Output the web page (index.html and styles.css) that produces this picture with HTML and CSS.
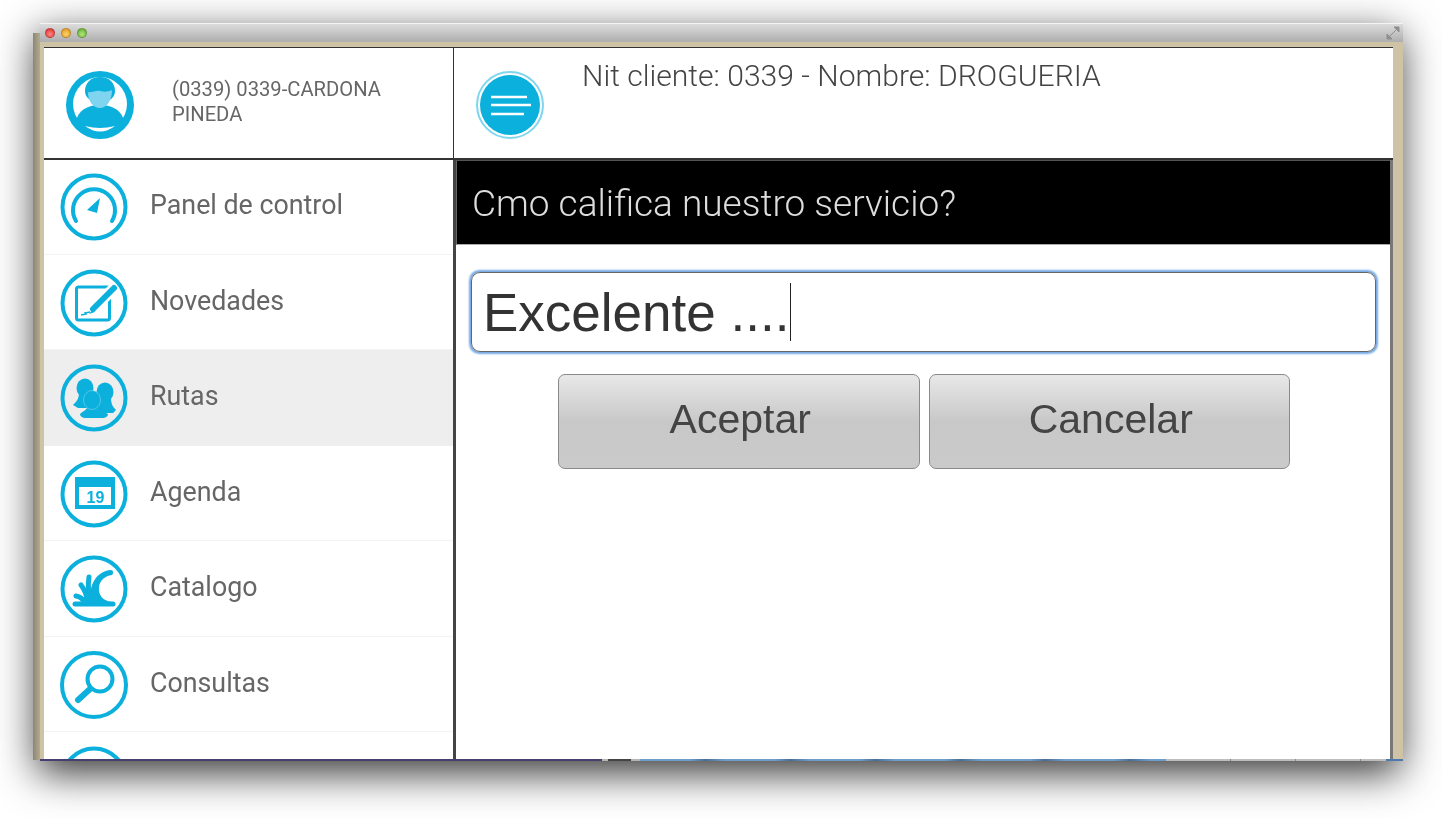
FILE: index.html
```html
<!DOCTYPE html>
<html lang="es">
<head>
<meta charset="utf-8">
<title>Encuesta</title>
<link rel="stylesheet" href="styles.css">
</head>
<body>
<div class="window">
  <div class="titlebar">
    <div class="lights"><span class="light red"></span><span class="light amber"></span><span class="light green"></span></div>
    <svg class="expand" width="14" height="14" viewBox="0 0 14 14"><path d="M1 13V8l5 5zM13 1v5L8 1zM3 11l8-8" fill="#8f8f8f" stroke="#8f8f8f"/></svg>
  </div>
  <div class="frame">
    <div class="app">
      <header class="top">
        <div class="user">
          <svg class="avatar" width="68" height="68" viewBox="0 0 68 68">
            <circle cx="34" cy="34" r="34" fill="#0bb0dc"/>
            <circle cx="34" cy="33" r="27" fill="#fff"/>
            <path d="M10 50C12 40 21 34 34 34s22 6 24 16l-8 14H18z" fill="#0bb0dc"/>
            <path d="M19 20C19 12 25 6 34 6s15 6 15 14c0 7-6 11-15 11s-15-4-15-11z" fill="#0bb0dc"/>
            <path d="M22 21c4 1 8-2 12-1s8 1 12-1c0 10-5 18-12 18s-12-7-12-16z" fill="#7fd4ef"/>
            <path d="M19 55Q34 59 49 55Q34 66 19 55z" fill="#fff"/>
          </svg>
          <div class="user-name">(0339) 0339-CARDONA PINEDA</div>
        </div>
        <div class="client">
          <svg class="burger" width="68" height="68" viewBox="0 0 68 68">
            <circle cx="34" cy="34" r="33" fill="#fff" stroke="#7fd6ef" stroke-width="2"/>
            <circle cx="34" cy="34" r="30" fill="#0bb0dc"/>
            <path d="M15 26h36M15 34h40M15 43h33" stroke="#fff" stroke-width="2.6" fill="none"/>
          </svg>
          <div class="client-text">Nit cliente: 0339 - Nombre: DROGUERIA</div>
        </div>
      </header>
      <div class="body">
        <nav class="menu">
          <a class="item">
            <svg class="ico" width="68" height="68" viewBox="0 0 68 68">
              <circle class="ring" cx="34" cy="34" r="31.5"/>
              <path d="M16 48A21 21 0 1 1 52 48" fill="none" stroke="#0bb0dc" stroke-width="4" stroke-linecap="round"/>
              <path d="M40 25L27 37L37 40z" fill="#0bb0dc"/>
            </svg>
            <span>Panel de control</span>
          </a>
          <a class="item">
            <svg class="ico" width="68" height="68" viewBox="0 0 68 68">
              <circle class="ring" cx="34" cy="34" r="31.5"/>
              <rect x="16.5" y="18" width="33" height="33" rx="2" fill="none" stroke="#0bb0dc" stroke-width="3"/>
              <path d="M30 43L56 17" stroke="#fff" stroke-width="11"/>
              <path d="M33 40L54 19" stroke="#0bb0dc" stroke-width="6" stroke-linecap="round"/>
              <path d="M33 40L29 45L35 43z" fill="#0bb0dc"/>
              <path d="M21 46l5-1-1-1 5-1" fill="none" stroke="#0bb0dc" stroke-width="1.4"/>
            </svg>
            <span>Novedades</span>
          </a>
          <a class="item active">
            <svg class="ico" width="68" height="68" viewBox="0 0 68 68">
              <circle class="ring" cx="34" cy="34" r="31.5"/>
              <ellipse cx="25" cy="24" rx="8.5" ry="9.5" fill="#0bb0dc"/>
              <ellipse cx="45" cy="28" rx="8.5" ry="9.5" fill="#0bb0dc"/>
              <path d="M13 41c3-3 6-6 6-12h12l5 15H18z" fill="#0bb0dc"/>
              <path d="M56 46c-3-3-5-6-5-12H37l-4 15h20z" fill="#0bb0dc"/>
              <path d="M20 50c3-3 7-4 8-8h10c1 4 5 5 10 8 0 2-2 4-6 4H26c-4 0-6-2-6-4z" fill="#0bb0dc"/>
              <ellipse cx="32" cy="36" rx="8.5" ry="9.5" fill="#0bb0dc" stroke="#7fd4ef" stroke-width=".6"/>
            </svg>
            <span>Rutas</span>
          </a>
          <a class="item">
            <svg class="ico" width="68" height="68" viewBox="0 0 68 68">
              <circle class="ring" cx="34" cy="34" r="31.5"/>
              <rect x="15" y="17" width="40" height="32" fill="#0bb0dc"/>
              <rect x="19" y="27" width="32" height="18" fill="#fff"/>
              <text class="date" x="35.5" y="43" text-anchor="middle">19</text>
            </svg>
            <span>Agenda</span>
          </a>
          <a class="item">
            <svg class="ico" width="68" height="68" viewBox="0 0 68 68">
              <circle class="ring" cx="34" cy="34" r="31.5"/>
              <path d="M15 49H53" stroke="#0bb0dc" stroke-width="5" stroke-linecap="round"/>
              <path d="M51 15C36 16 28 31 31 47L52 47C43 46 38 40 39 32C40 25 45 21 52 20C54 18 53 15 51 15z" fill="#0bb0dc"/>
              <path d="M31 46Q27 35 29 22M27 46Q27 38 21 30M24 47Q22 42 16 41" fill="none" stroke="#0bb0dc" stroke-width="5" stroke-linecap="round"/>
            </svg>
            <span>Catalogo</span>
          </a>
          <a class="item">
            <svg class="ico" width="68" height="68" viewBox="0 0 68 68">
              <circle class="ring" cx="34" cy="34" r="32"/>
              <circle cx="40" cy="28" r="12.5" fill="none" stroke="#0bb0dc" stroke-width="4"/>
              <path d="M18 49L30 38" stroke="#0bb0dc" stroke-width="6" stroke-linecap="round"/>
            </svg>
            <span>Consultas</span>
          </a>
          <a class="item">
            <svg class="ico" width="68" height="68" viewBox="0 0 68 68">
              <circle class="ring" cx="34" cy="34" r="31.5"/>
            </svg>
          </a>
        </nav>
        <main class="panel">
          <h1 class="question">Cmo califica nuestro servicio?</h1>
          <div class="form">
            <div class="answer"><span>Excelente ....</span><i class="caret"></i></div>
            <div class="actions">
              <button class="btn" type="button">Aceptar</button>
              <button class="btn" type="button">Cancelar</button>
            </div>
          </div>
        </main>
      </div>
    </div>
  </div>
  <div class="strip">
    <div class="seg purple"></div>
    <div class="seg grey"></div>
    <div class="seg blue"></div>
    <div class="seg ticks"></div>
    <div class="seg end"></div>
  </div>
</div>
</body>
</html>
```
FILE: styles.css
```css
* { box-sizing: border-box; }
html, body { margin: 0; height: 100%; background: #fff; overflow: hidden; }
body { padding: 23px 39px 0 40px; font-family: Roboto, "Liberation Sans", sans-serif; }

.window {
  position: relative;
  height: 738px;
  display: flex;
  flex-direction: column;
  box-shadow: -3px 12px 38px rgba(0, 0, 0, .8);
}
.window::before {
  content: "";
  position: absolute;
  left: -7px;
  top: 10px;
  bottom: 1px;
  width: 7px;
  background: linear-gradient(to right, #8c8672, #b3aa92);
}

.titlebar {
  height: 19px;
  flex: none;
  display: flex;
  align-items: center;
  justify-content: space-between;
  padding: 0 3px 0 5px;
  border-top: 1px solid #f4f4f4;
  background: linear-gradient(#dcdcdc, #aeaeae);
}
.lights { display: flex; gap: 6px; }
.light { width: 10px; height: 10px; border-radius: 50%; border: 1px solid rgba(0, 0, 0, .2); }
.red { background: radial-gradient(circle at 50% 65%, #ff8a80, #d9262a); }
.amber { background: radial-gradient(circle at 50% 65%, #ffd36b, #d98f14); }
.green { background: radial-gradient(circle at 50% 65%, #b6e77a, #58a52c); }

.frame {
  flex: 1;
  min-height: 0;
  padding: 5px 10px 0 4px;
  background: #cfc3a6;
}
.app {
  height: 100%;
  display: flex;
  flex-direction: column;
  background: #fff;
  border-top: 1px solid #333;
  filter: blur(.35px);
}

.top {
  height: 112px;
  flex: none;
  display: flex;
  border-bottom: 2px solid #333;
}
.user {
  width: 410px;
  flex: none;
  display: flex;
  padding: 23px 0 0 22px;
  border-right: 1px solid #333;
}
.avatar { flex: none; }
.user-name {
  width: 232px;
  margin: 6px 0 0 38px;
  font-size: 20.2px;
  line-height: 25px;
  color: #666;
}
.client { flex: 1; display: flex; padding: 23px 0 0 22px; }
.burger { flex: none; }
.client-text {
  margin: -12px 0 0 38px;
  font-size: 30.1px;
  font-weight: 300;
  line-height: 34px;
  color: #444;
  white-space: nowrap;
}

.body { flex: 1; min-height: 0; display: flex; }
.menu { width: 409px; flex: none; margin-top: -1px; overflow: hidden; }
.item {
  height: 95.5px;
  display: flex;
  align-items: center;
  gap: 23px;
  padding: 2px 0 0 16px;
  border-bottom: 1px solid #f3f3f3;
  font-size: 26.8px;
  color: #666;
}
.item span { margin: -4px 0 0 -1px; }
.active { background: #eee; border-bottom-color: #eee; }
.ico { flex: none; }
.ring { fill: none; stroke: #0bb0dc; stroke-width: 4; }
.date { font: 700 16px "Liberation Sans", sans-serif; fill: #0bb0dc; }

.panel {
  flex: 1;
  min-width: 0;
  display: flex;
  flex-direction: column;
  border-left: 3px solid #444;
  border-right: 3px solid #777;
}
.question {
  height: 85px;
  flex: none;
  margin: 0;
  padding: 20px 0 0 15px;
  font-size: 37px;
  font-weight: 300;
  line-height: 46px;
  color: #ddd;
  background: #000;
  border-top: 1px solid #555;
  border-left: 1px solid #666;
  border-bottom: 1px solid #aaa;
}
.form { padding: 27px 14px 0 15px; }
.answer {
  height: 80px;
  display: flex;
  align-items: center;
  padding-left: 11px;
  border: 1px solid #666;
  border-radius: 9px;
  box-shadow: 0 0 2px 1.5px #74a8e2;
  font: 53px "Liberation Sans", sans-serif;
  color: #333;
}
.caret { width: 1px; height: 58px; margin-left: 1px; background: #222; }
.actions {
  display: flex;
  justify-content: center;
  gap: 9px;
  margin-top: 22px;
  padding-left: 1px;
}
.btn {
  width: 361.5px;
  height: 95px;
  padding: 0 0 5px 3px;
  border: 1px solid #8a8a8a;
  border-radius: 7px;
  background: linear-gradient(#e8e8e8, #c8c8c8 50%, #cacaca);
  font: 41px "Liberation Sans", sans-serif;
  color: #444;
}

.strip {
  height: 2px;
  flex: none;
  display: flex;
  overflow: hidden;
}
.purple { width: 562px; background: #45406f; }
.grey {
  width: 38px;
  background: linear-gradient(to right, #b5b5b5 15%, #444 15%, #444 75%, #b5b5b5 75%);
}
.blue {
  width: 526px;
  background: repeating-linear-gradient(to right, #6d9dcc 0 50px, #4d6d8f 65px, #6d9dcc 85px);
}
.ticks {
  width: 220px;
  background: repeating-linear-gradient(to right, #bdbdbd 0 64px, #888 64px 65px);
}
.end { flex: 1; background: #4f79ad; }
```
